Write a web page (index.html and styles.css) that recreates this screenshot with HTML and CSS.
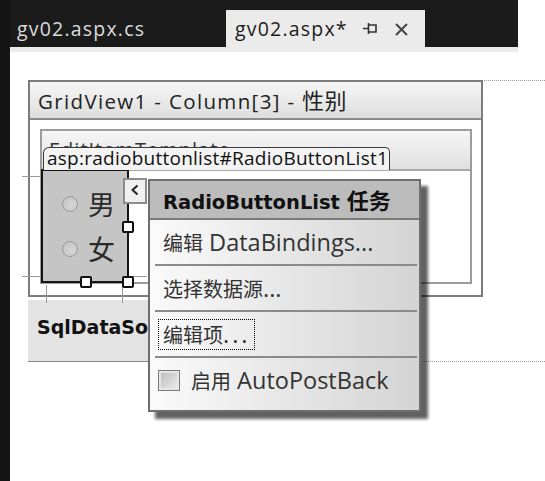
FILE: index.html
```html
<!DOCTYPE html>
<html>
<head>
<meta charset="utf-8">
<link rel="stylesheet" href="styles.css">
</head>
<body>
<div class="app">
  <div class="leftbar"></div>
  <div class="main">
    <div class="tabbar">
      <div class="tab">gv02.aspx.cs</div>
      <div class="tab active">
        <span class="tab-name">gv02.aspx*</span>
        <svg class="pin" width="16" height="14" viewBox="0 0 16 14"><path d="M1 6.5H6M6.5 1V12M6.5 3H14V10H6.5" fill="none" stroke="#333" stroke-width="1.6"/></svg>
        <svg class="close" width="15" height="15" viewBox="0 0 15 15"><path d="M2 2L13 13M13 2L2 13" stroke="#444" stroke-width="2"/></svg>
      </div>
    </div>
    <div class="strip"></div>
    <div class="surface">
      <div class="grid">
        <div class="grid-head">GridView1 - Column[3] - <span class="cjk-t">性别</span></div>
        <div class="grid-body">
          <div class="tpl">
            <div class="tpl-head">EditItemTemplate</div>
            <div class="tpl-body">
              <div class="ctl">
                <div class="tag">asp:radiobuttonlist#RadioButtonList1</div>
                <div class="radio-row"><span class="radio"></span><span class="radio-label">男</span></div>
                <div class="radio-row"><span class="radio"></span><span class="radio-label">女</span></div>
                <span class="guide gh1"></span>
                <span class="guide gh2"></span>
                <span class="guide gh3"></span>
                <span class="guide gv1"></span>
                <span class="guide gv2"></span>
                <span class="handle h-right"></span>
                <span class="handle h-bottom"></span>
                <span class="handle h-corner"></span>
                <div class="chevron"><svg width="10" height="12" viewBox="0 0 10 12"><path d="M7.5 1.5L2.5 6L7.5 10.5" fill="none" stroke="#222" stroke-width="2"/></svg></div>
                <div class="menu">
                  <div class="menu-head">RadioButtonList <span class="cjk-b">任务</span></div>
                  <div class="menu-item"><span class="cjk">编辑</span> DataBindings...</div>
                  <div class="sep"></div>
                  <div class="menu-item"><span class="cjk">选择数据源</span>...</div>
                  <div class="sep"></div>
                  <div class="menu-item"><span class="focus"><span class="cjk">编辑项</span><span class="dots">...</span></span></div>
                  <div class="sep"></div>
                  <div class="menu-item last"><span class="check"></span><span class="cjk">启用</span> AutoPostBack</div>
                </div>
              </div>
            </div>
          </div>
        </div>
      </div>
      <div class="sds"><span class="sds-name">SqlDataSource - SqlDataSource1</span></div>
    </div>
  </div>
</div>
</body>
</html>
```
FILE: styles.css
```css
* { box-sizing: border-box; }
html, body { margin: 0; padding: 0; }
body {
  width: 545px;
  height: 481px;
  overflow: hidden;
  background: #fff;
  font-family: "Open Sans", "Noto Sans CJK SC", sans-serif;
  color: #1e1e1e;
}
.app { display: flex; height: 481px; }
.leftbar { width: 10px; background: #141414; flex: none; }
.main { width: 535px; flex: none; }

.tabbar {
  width: 508px;
  height: 47px;
  background: #1b1b1b;
  display: flex;
  align-items: flex-end;
}
.tab {
  height: 37px;
  width: 216px;
  padding: 5px 0 0 7px;
  font-size: 19.5px;
  letter-spacing: 1.2px;
  line-height: 28px;
  color: #dcdcdc;
}
.tab.active {
  width: 199px;
  background: #ebebeb;
  color: #1c1c1c;
  padding-left: 9px;
  display: flex;
  align-items: center;
  padding-top: 1px;
}
.tab-name { margin-right: 14px; }
.pin { margin-right: 16px; }
.strip { width: 508px; height: 5px; background: #ebebeb; }

.surface {
  margin: 28px 0 0 18px;
  width: 517px;
  border-top: 1px dotted #9c9c9c;
  border-bottom: 1px dotted #9c9c9c;
}
.grid {
  margin-top: -1px;
  width: 455px;
  height: 217px;
  border: 2px solid #7c7c7c;
  background: #fff;
}
.grid-head {
  height: 38px;
  border-bottom: 2px solid #8a8a8a;
  background: linear-gradient(#f6f6f6, #dedede);
  padding-left: 8px;
  font-size: 20.5px;
  letter-spacing: 1.35px;
  line-height: 37px;
  color: #222;
  white-space: nowrap;
}
.cjk-t { font-size: 22px; letter-spacing: 0.5px; }
.grid-body { padding: 9px 0 0 10px; }
.tpl {
  width: 432px;
  height: 155px;
  border: 2px solid #9c9c9c;
}
.tpl-head {
  height: 40px;
  border-bottom: 2px solid #a8a8a8;
  background: linear-gradient(#f6f6f6, #e0e0e0);
  padding: 4px 0 0 7px;
  font-size: 20px;
  letter-spacing: 1px;
  line-height: 30px;
  color: #333;
}
.tpl-body { height: 111px; }
.ctl {
  position: relative;
  margin: -2px 0 0 -1px;
  width: 88px;
  height: 114px;
  border: 2px solid #151515;
  background: #c5c5c5;
  padding: 10px 0 0 19px;
}
.tag {
  position: absolute;
  left: 0;
  top: -24px;
  width: 347px;
  height: 23px;
  border: 1px solid #3a3a3a;
  border-bottom: none;
  border-radius: 6px 5px 0 0;
  background: #f3f3f3;
  padding-left: 3px;
  font-size: 19px;
  letter-spacing: 0.25px;
  line-height: 21px;
  color: #111;
  white-space: nowrap;
}
.radio-row {
  height: 45px;
  display: flex;
  align-items: center;
}
.radio {
  width: 16px;
  height: 16px;
  border-radius: 50%;
  border: 1.5px solid #9a9a9a;
  background: radial-gradient(circle at 60% 60%, #d6d6d6, #c0c0c0);
  margin-right: 10px;
  flex: none;
}
.radio-label {
  font-family: "Noto Sans CJK SC", sans-serif;
  font-size: 27px;
  line-height: 30px;
  color: #2a2a2a;
}
.guide { position: absolute; background: #9a9a9a; }
.gh1 { left: -21px; top: 5px; width: 19px; height: 1px; }
.gh2 { left: -21px; top: 105px; width: 19px; height: 1px; }
.gh3 { left: 88px; top: 105px; width: 16px; height: 1px; }
.gv1 { left: 3px; top: 114px; width: 1px; height: 18px; }
.gv2 { left: 79px; top: 114px; width: 1px; height: 18px; }
.handle {
  position: absolute;
  width: 12px;
  height: 12px;
  background: #fff;
  border: 2px solid #111;
  border-radius: 2px;
}
.h-right { left: 79px; top: 50px; }
.h-bottom { left: 37px; top: 105px; }
.h-corner { left: 79px; top: 105px; }
.chevron {
  position: absolute;
  left: 80px;
  top: 7px;
  width: 24px;
  height: 26px;
  border: 2px solid #8c8c8c;
  background: #f0f0f0;
  display: flex;
  align-items: center;
  justify-content: center;
  padding-bottom: 3px;
}
.menu {
  position: absolute;
  left: 105px;
  top: 8px;
  width: 273px;
  height: 233px;
  border: 2px solid #6e6e6e;
  background: linear-gradient(to right, #fafafa, #d4d4d4);
  box-shadow: 7px 7px 3px rgba(0,0,0,0.62);
  z-index: 2;
}
.menu-head {
  height: 39px;
  background: #bcbcbc;
  border-bottom: 2px solid #7a7a7a;
  padding-left: 13px;
  font-family: "DejaVu Sans", "Noto Sans CJK SC", sans-serif;
  font-weight: bold;
  font-size: 19.5px;
  line-height: 37px;
  color: #111;
  white-space: nowrap;
}
.cjk-b { font-family: "Noto Sans CJK SC", sans-serif; font-size: 22px; }
.menu-item {
  height: 44px;
  padding-left: 13px;
  display: flex;
  align-items: center;
  font-size: 23.5px;
  color: #333;
  white-space: pre;
}
.menu-item.last { height: 50px; padding-bottom: 6px; }
.cjk { font-family: "Noto Sans CJK SC", sans-serif; font-size: 20px; }
.sep { height: 2px; margin: 0 2px 0 5px; background: #8a8a8a; }
.focus {
  margin-left: -5px;
  padding: 0 3px 0 4px;
  height: 31px;
  border: 1px dotted #000;
  display: flex;
  align-items: center;
}
.dots { letter-spacing: 3px; }
.check {
  width: 22px;
  height: 21px;
  margin-left: -5px;
  margin-right: 11px;
  border: 1.5px solid #7a7a7a;
  background: linear-gradient(135deg, #b8b8b8, #f0f0f0);
  box-shadow: inset 0 0 0 2px #e6e6e6;
}

.sds {
  margin-top: 3px;
  margin-bottom: -1px;
  width: 392px;
  height: 62px;
  background: #e3e3e3;
  border-bottom: 1px solid #888;
  padding-left: 9px;
  font-family: "DejaVu Sans", sans-serif;
  font-weight: bold;
  font-size: 19px;
  line-height: 54px;
  color: #111;
}
.sds-name {
  display: block;
  width: 111px;
  overflow: hidden;
  white-space: nowrap;
}
```
